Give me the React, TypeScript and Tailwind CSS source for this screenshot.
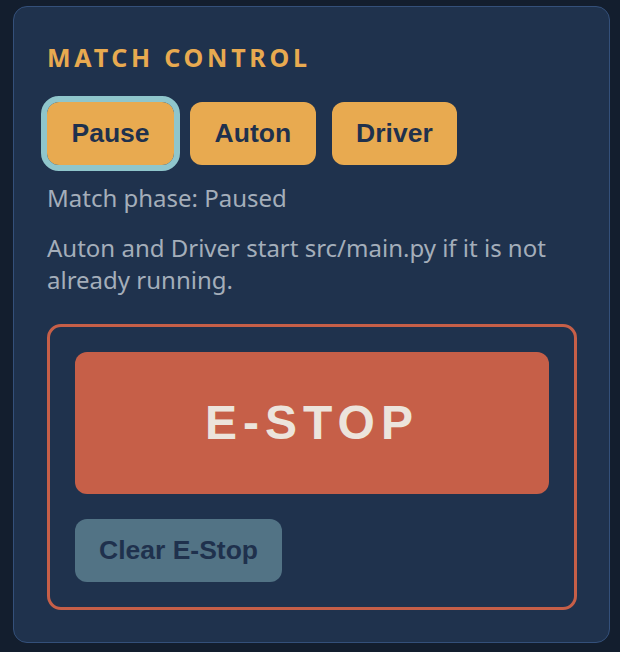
import React from "react";

export default function App() {
  const btn =
    "h-[63px] px-[24.5px] rounded-[12px] bg-[#e8aa50] text-[#1f314d] text-[26.5px] font-bold leading-none";
  return (
    <div className="min-h-[652px] w-[620px] bg-[#131e2e] pl-[13px] pr-[10px] pt-[6px] pb-[9px]">
      <div className="h-[637px] rounded-[14px] border border-[#34507a] bg-[#1f324d] pl-[33px] pr-[32px] pt-[33px] pb-[32px] font-['Noto_Sans',sans-serif]">
        <h2 className="text-[25px] leading-[34px] font-bold tracking-[0.15em] text-[#e8aa50]">
          MATCH CONTROL
        </h2>
        <div className="mt-[28px] flex gap-[16px] font-['Liberation_Sans',Arial,sans-serif]">
          <button className={`${btn} outline-[6px] outline-solid outline-[#8fc6cc]`}>Pause</button>
          <button className={btn}>Auton</button>
          <button className={btn}>Driver</button>
        </div>
        <p className="mt-[17px] text-[24px] leading-[32px] text-[#a4aeba]">Match phase: Paused</p>
        <p className="mt-[18px] text-[24px] leading-[32px] text-[#a4aeba]">
          Auton and Driver start src/main.py if it is not already running.
        </p>
        <div className="mt-[28px] rounded-[14px] border-[3px] border-[#c65f48] p-[25px] font-['Liberation_Sans',Arial,sans-serif]">
          <button className="flex h-[142px] w-full items-center justify-center rounded-[12px] bg-[#c65f48] text-[48px] font-bold leading-none tracking-[6px] text-[#ece4dc]">
            E-STOP
          </button>
          <button className="mt-[25px] h-[63px] rounded-[12px] bg-[#527385] px-[24px] text-[26.5px] font-bold leading-none text-[#1f314d]">
            Clear E-Stop
          </button>
        </div>
      </div>
    </div>
  );
}
